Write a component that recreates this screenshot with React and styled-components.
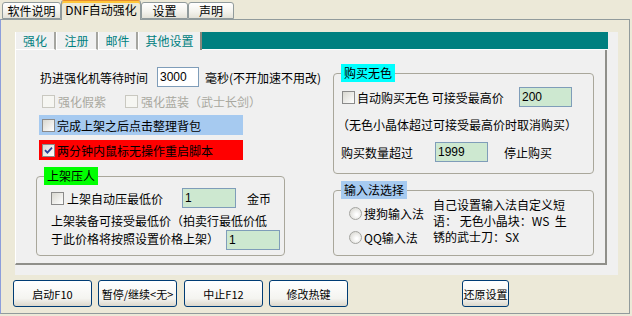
import React from 'react';
import styled, { createGlobalStyle } from 'styled-components';

const GlobalStyle = createGlobalStyle`
  html, body {
    margin: 0;
    padding: 0;
    background: #ECE9D8;
  }
  body {
    font-family: "Noto Sans CJK SC", "Noto Sans", sans-serif;
    font-size: 12px;
    color: #000;
  }
`;

const Window = styled.div`
    display: flex;
    flex-direction: column;
    width: 632px;
    height: 316px;
    overflow: hidden;
    background: #ECE9D8;
`;

const TabBar = styled.div`
    display: flex;
    align-items: flex-end;
    height: 19px;
    padding-left: 2px;
`;

const OuterTab = styled.div`
    position: relative;
    z-index: ${p => (p.$active ? 2 : 1)};
    box-sizing: border-box;
    width: ${p => p.$w}px;
    height: ${p => (p.$active ? 20 : 17)}px;
    margin-bottom: ${p => (p.$active ? -1 : 0)}px;
    border: 1px solid #919B9C;
    border-bottom: ${p => (p.$active ? 'none' : '1px solid #919B9C')};
    border-top-color: ${p => (p.$active ? '#E68B2C' : '#919B9C')};
    border-radius: 3px 3px 0 0;
    box-shadow: ${p => (p.$active ? 'inset 0 2px 0 #FFC73C' : 'none')};
    background: ${p => (p.$active ? '#ECE9D8' : 'linear-gradient(#FFFFFF, #F3F2EC 60%, #E4E2D8)')};

    font-size: 12px;
    line-height: ${p => (p.$active ? 18 : 15)}px;
    text-align: center;
    white-space: nowrap;
`;

const Panel = styled.div`
    box-sizing: border-box;
    width: 630px;
    height: 295px;
    padding-top: 12px;
    border: 1px solid #919B9C;
    border-left-color: #8C9EDB;
`;

const InnerArea = styled.div`
    display: flex;
    flex-direction: column;
    box-sizing: border-box;
    width: 603px;
    height: 243px;
    margin-left: 14px;
    padding: 0 11px 10px 0;
    background: #F0F0F0;
`;

const InnerTabBar = styled.div`
    display: flex;
    height: 18px;
`;

const InnerTab = styled.div`
    box-sizing: border-box;
    width: ${p => p.$w}px;
    height: 18px;
    border-left: 1px solid #FFFFFF;
    border-right: 2px solid ${p => (p.$active ? '#8A877C' : '#A5A5A0')};
    border-bottom: ${p => (p.$active ? 'none' : '1px solid #FFFFFF')};
    color: #008080;
    line-height: 17px;
    text-align: center;
    white-space: nowrap;
`;

const TealFill = styled.div`
    flex: 1;
    height: 17px;
    margin-right: -1px;
    background: #008080;
    border-bottom: 1px solid #FFFFFF;
`;

const InnerPage = styled.div`
    display: grid;
    grid-template-columns: 249px 261px;
    column-gap: 48px;
    align-items: start;
    box-sizing: border-box;
    height: 215px;
    padding-left: 20px;
    border-left: 1px solid #FFFFFF;
    border-right: 2px solid #8F8F8A;
    border-bottom: 2px solid #8F8F8A;
`;

const Column = styled.div`
    display: flex;
    flex-direction: column;
    padding-top: ${p => p.$top}px;
`;

const Row = styled.div`
    display: flex;
    align-items: center;
    height: ${p => p.$h || 20}px;
    margin-top: ${p => p.$mt || 0}px;
    padding-left: ${p => p.$pl || 0}px;
    white-space: nowrap;
`;

const HighlightRow = styled(Row)`
    box-sizing: border-box;
    width: 204px;
    margin-left: 3px;
    background: ${p => p.$bg};
`;

const Label = styled.span`
    margin-left: ${p => p.$ml || 0}px;
    width: ${p => (p.$w ? `${p.$w}px` : 'auto')};
    color: ${p => (p.$disabled ? '#A9A89F' : '#000')};
    white-space: nowrap;
`;

const TextBox = styled.div`
    box-sizing: border-box;
    width: ${p => p.$w}px;
    height: 20px;
    margin-left: ${p => p.$ml || 0}px;
    padding-left: 2px;
    border: 1px solid #7F9DB9;
    background: ${p => p.$bg || '#CDE8D0'};
    font-family: "Liberation Sans", "DejaVu Sans", sans-serif;
    font-size: 12px;
    line-height: 18px;
    flex-shrink: 0;
`;

const CheckBox = styled.span`
    display: inline-flex;
    align-items: center;
    justify-content: center;
    box-sizing: border-box;
    width: 13px;
    height: 13px;
    margin-left: ${p => p.$ml || 0}px;
    border: 1px solid ${p => (p.$disabled ? '#C9C8C0' : '#8A8A8A')};
    background: ${p => (p.$disabled ? '#F6F6F2' : 'linear-gradient(135deg, #D8D7D0, #FFFFFF)')};
    flex-shrink: 0;
`;

const Radio = styled.span`
    box-sizing: border-box;
    width: 13px;
    height: 13px;
    border: 1px solid #A4A4A0;
    border-radius: 50%;
    background: radial-gradient(circle at 60% 60%, #FFFFFF 10%, #D6D5CF 90%);
    flex-shrink: 0;
`;

const Group = styled.fieldset`
    box-sizing: border-box;
    min-width: 0;
    width: 100%;
    margin: ${p => p.$mt || 0}px 0 0;
    padding: 0 0 ${p => p.$pb || 0}px;
    border: 1px solid #A9A79B;
    border-radius: 4px;
`;

const GroupTitle = styled.legend`
    height: 18px;
    margin-left: 7px;
    padding: 0 3px;
    background: ${p => p.$bg};
    line-height: 18px;
`;

const GroupBody = styled.div`
    padding-left: ${p => p.$pl || 0}px;
`;

const TextLine = styled.div`
    align-self: ${p => p.$self || 'auto'};
    margin-top: ${p => p.$mt || 0}px;
    padding-left: ${p => p.$pl || 0}px;
    line-height: 17px;
    white-space: nowrap;
`;

const ImeBody = styled.div`
    display: flex;
`;

const RadioColumn = styled.div`
    display: flex;
    flex-direction: column;
    gap: 8px;
    box-sizing: border-box;
    width: 99px;
    padding: 6px 0 0 15px;
`;

const RadioRow = styled.div`
    display: flex;
    align-items: center;
    gap: 2px;
    height: 16px;
    white-space: nowrap;
`;

const Hint = styled.div`
    margin-top: -2px;
    line-height: 16px;
    white-space: pre;
`;

const ButtonRow = styled.div`
    display: flex;
    margin: 5px 0 0 12px;
`;

const Button = styled.button`
    box-sizing: border-box;
    width: ${p => p.$w}px;
    height: 27px;
    margin-left: ${p => p.$ml || 0}px;
    padding: 0;
    border: 1px solid #003C74;
    border-radius: 3px;
    background: linear-gradient(#FFFFFF, #F4F4F0 70%, #DCD8CC);
    font-family: "Noto Sans CJK SC", "Noto Sans", sans-serif;
    font-size: 11px;
    color: #000;
    white-space: nowrap;
`;

function Check({ checked, disabled, ml }) {
    return (
        <CheckBox $disabled={disabled} $ml={ml}>
            {checked && (
                <svg width="9" height="9" viewBox="0 0 9 9">
                    <path d="M1 4.2 L3.4 6.6 L8 1.6" fill="none" stroke="#2A3F9A" strokeWidth="1.8" />
                </svg>
            )}
        </CheckBox>
    );
}

export default function App() {
    return (
        <Window>
            <GlobalStyle />
            <TabBar>
                <OuterTab $w={59}>软件说明</OuterTab>
                <OuterTab $w={80} $active>DNF自动强化</OuterTab>
                <OuterTab $w={47}>设置</OuterTab>
                <OuterTab $w={46}>声明</OuterTab>
            </TabBar>
            <Panel>
                <InnerArea>
                    <InnerTabBar>
                        <InnerTab $w={41}>强化</InnerTab>
                        <InnerTab $w={42}>注册</InnerTab>
                        <InnerTab $w={40}>邮件</InnerTab>
                        <InnerTab $w={64} $active>其他设置</InnerTab>
                        <TealFill />
                    </InnerTabBar>
                    <InnerPage>
                        <Column $top={17}>
                            <Row $pl={4}>
                                <Label>扔进强化机等待时间</Label>
                                <TextBox $w={42} $ml={9} $bg="#FFFFFF">3000</TextBox>
                                <Label $ml={6}>毫秒(不开加速不用改)</Label>
                            </Row>
                            <Row $h={16} $mt={6} $pl={6}>
                                <Check disabled />
                                <Label $ml={3} $disabled>强化假紫</Label>
                                <Check disabled ml={19} />
                                <Label $ml={3} $disabled>强化蓝装（武士长剑）</Label>
                            </Row>
                            <HighlightRow $mt={6} $pl={3} $bg="#A6CAF0">
                                <Check />
                                <Label $ml={2}>完成上架之后点击整理背包</Label>
                            </HighlightRow>
                            <HighlightRow $mt={5} $pl={3} $bg="#FF0000">
                                <Check checked />
                                <Label $ml={2}>两分钟内鼠标无操作重启脚本</Label>
                            </HighlightRow>
                            <Group $mt={7} $pb={5}>
                                <GroupTitle $bg="#00FF00">上架压人</GroupTitle>
                                <GroupBody $pl={14}>
                                    <Row $mt={3}>
                                        <Check />
                                        <Label $ml={3} $w={115}>上架自动压最低价</Label>
                                        <TextBox $w={54}>1</TextBox>
                                        <Label $ml={11}>金币</Label>
                                    </Row>
                                    <TextLine $mt={4}>上架装备可接受最低价（拍卖行最低价低</TextLine>
                                    <Row $mt={1}>
                                        <TextLine $self="flex-start">于此价格将按照设置价格上架）</TextLine>
                                        <TextBox $w={54} $ml={7}>1</TextBox>
                                    </Row>
                                </GroupBody>
                            </Group>
                        </Column>
                        <Column $top={14}>
                            <Group $pb={11}>
                                <GroupTitle $bg="#00FFFF">购买无色</GroupTitle>
                                <GroupBody>
                                    <Row $mt={5} $pl={8}>
                                        <Check />
                                        <Label $ml={2} $w={162}>自动购买无色 可接受最高价</Label>
                                        <TextBox $w={53}>200</TextBox>
                                    </Row>
                                    <TextLine $mt={9} $pl={3}>（无色小晶体超过可接受最高价时取消购买）</TextLine>
                                    <Row $mt={9} $pl={7}>
                                        <Label $w={94}>购买数量超过</Label>
                                        <TextBox $w={53}>1999</TextBox>
                                        <Label $ml={16}>停止购买</Label>
                                    </Row>
                                </GroupBody>
                            </Group>
                            <Group $mt={7} $pb={10}>
                                <GroupTitle $bg="#A6CAF0">输入法选择</GroupTitle>
                                <ImeBody>
                                    <RadioColumn>
                                        <RadioRow>
                                            <Radio />
                                            <span>搜狗输入法</span>
                                        </RadioRow>
                                        <RadioRow>
                                            <Radio />
                                            <span>QQ输入法</span>
                                        </RadioRow>
                                    </RadioColumn>
                                    <Hint>{'自己设置输入法自定义短\n语： 无色小晶块：WS  生\n锈的武士刀：SX'}</Hint>
                                </ImeBody>
                            </Group>
                        </Column>
                    </InnerPage>
                </InnerArea>
                <ButtonRow>
                    <Button $w={79}>启动F10</Button>
                    <Button $w={79} $ml={6}>暂停/继续&lt;无&gt;</Button>
                    <Button $w={79} $ml={7}>中止F12</Button>
                    <Button $w={79} $ml={6}>修改热键</Button>
                    <Button $w={47} $ml={114}>还原设置</Button>
                </ButtonRow>
            </Panel>
        </Window>
    );
}
